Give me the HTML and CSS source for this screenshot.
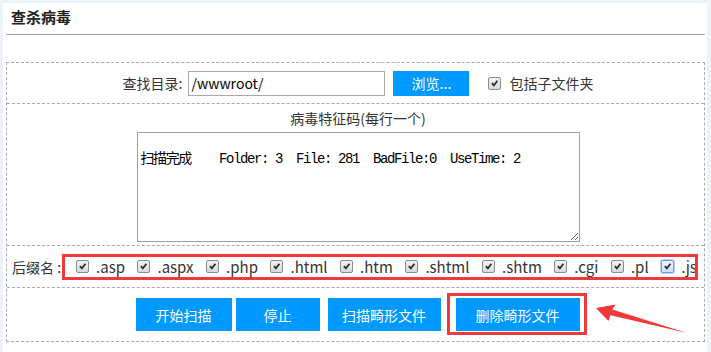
FILE: index.html
```html
<!DOCTYPE html>
<html lang="zh-CN">

<head>
    <meta charset="UTF-8">
    <title>查杀病毒</title>
    <link rel="stylesheet" href="styles.css">
</head>

<body>
    <svg class="defs" width="0" height="0">
        <symbol id="chk" viewBox="0 0 13 13">
            <path d="M2.6 6.8 L4.3 5.4 L5.7 7.2 L9.2 2.6 L10.8 3.8 L5.8 10.2 Z" fill="#2b2b2b" />
        </symbol>
    </svg>

    <div class="panel">
        <!-- Заголовок -->
        <h2 class="title">查杀病毒</h2>

        <div class="box">
            <!-- Каталог -->
            <div class="row row-path">
                <label class="lbl">查找目录:</label>
                <input class="path" type="text" value="/wwwroot/">
                <button class="btn btn-browse">浏览...</button>
                <label class="opt"><span class="ck"><svg><use href="#chk" /></svg></span>包括子文件夹</label>
            </div>

            <!-- Сигнатуры -->
            <div class="row row-sig">
                <div class="sig-title">病毒特征码(每行一个)</div>
                <textarea class="sig" spellcheck="false">

扫描完成    Folder: 3  File: 281  BadFile:0  UseTime: 2</textarea>
            </div>

            <!-- Расширения -->
            <div class="row row-ext">
                <span class="lbl">后缀名 :</span>
                <div class="ext-box">
                    <label class="ext"><span class="ck"><svg><use href="#chk" /></svg></span>.asp</label>
                    <label class="ext"><span class="ck"><svg><use href="#chk" /></svg></span>.aspx</label>
                    <label class="ext"><span class="ck"><svg><use href="#chk" /></svg></span>.php</label>
                    <label class="ext"><span class="ck"><svg><use href="#chk" /></svg></span>.html</label>
                    <label class="ext"><span class="ck"><svg><use href="#chk" /></svg></span>.htm</label>
                    <label class="ext"><span class="ck"><svg><use href="#chk" /></svg></span>.shtml</label>
                    <label class="ext"><span class="ck"><svg><use href="#chk" /></svg></span>.shtm</label>
                    <label class="ext"><span class="ck"><svg><use href="#chk" /></svg></span>.cgi</label>
                    <label class="ext"><span class="ck"><svg><use href="#chk" /></svg></span>.pl</label>
                    <label class="ext"><span class="ck focus"><svg><use href="#chk" /></svg></span>.js</label>
                </div>
            </div>

            <!-- Кнопки -->
            <div class="row row-btns">
                <button class="btn btn-start">开始扫描</button>
                <button class="btn btn-stop">停止</button>
                <button class="btn btn-scan">扫描畸形文件</button>
                <span class="mark"><button class="btn btn-del">删除畸形文件</button></span>
            </div>
        </div>

        <!-- Стрелка-пометка -->
        <svg class="arrow" width="100" height="40" viewBox="0 0 100 40">
            <polygon points="6,12 25.5,8.5 22.4,13.4 97,37 20.4,19.2 18.5,25" fill="#f03a3a" />
        </svg>
    </div>
</body>

</html>
```

FILE: styles.css
```css
/* Общие стили */
body {
    margin: 0;
    background-color: #edf2fa;
    font-family: 'Noto Sans CJK SC', 'Noto Sans', sans-serif;
    font-size: 14px;
    color: #333;
}

.defs {
    position: absolute;
}

.panel {
    position: relative;
    margin: 3px 4px 0 3px;
    min-height: 349px;
    background-color: #fff;
}

/* Заголовок */
.title {
    margin: 0 2px 0 3px;
    padding: 0 0 3px 5px;
    line-height: 28px;
    font-size: 15px;
    font-weight: bold;
    color: #222;
    border-bottom: 1px solid #a3a3a3;
}

/* Таблица с пунктиром */
.box {
    margin: 27px 2px 0 3px;
    border: 1px dashed #aaa;
}

.row {
    display: flex;
    align-items: center;
    justify-content: center;
}

.row + .row {
    border-top: 1px dashed #aaa;
}

.row-path {
    height: 40px;
    padding-left: 5px;
}

.row-path .lbl {
    margin-right: 6px;
}

.path {
    width: 197px;
    height: 25px;
    box-sizing: border-box;
    border: 1px solid #a9a9a9;
    padding: 0 2px;
    font-family: inherit;
    font-size: 14px;
    color: #000;
    outline: none;
}

.btn {
    border: none;
    background-color: #0099ff;
    color: #fff;
    font-family: inherit;
    font-size: 14px;
    padding: 0;
    cursor: pointer;
}

.btn-browse {
    width: 76px;
    height: 25px;
    margin-left: 8px;
}

.opt {
    display: flex;
    align-items: center;
    margin-left: 19px;
}

.opt .ck {
    margin-right: 8px;
}

/* Чекбокс */
.ck {
    display: inline-block;
    width: 13px;
    height: 13px;
    box-sizing: border-box;
    border: 1px solid #8c8c8c;
    border-radius: 2px;
    background: linear-gradient(#f3f3f3, #d9d9d9);
    flex: none;
}

.ck svg {
    display: block;
    width: 11px;
    height: 11px;
}

.ck.focus {
    border-color: #6e9de4;
    background: linear-gradient(#eef4fd, #cfdff6);
    box-shadow: 0 0 0 1px #b9d0f3;
}

/* Сигнатуры */
.row-sig {
    flex-direction: column;
    padding: 4px 0 3px 5px;
}

.sig-title {
    line-height: 20px;
}

.sig {
    width: 443px;
    height: 110px;
    box-sizing: border-box;
    margin-top: 4px;
    padding: 2px 3px;
    border: 1px solid #a0a0a0;
    font-family: 'Liberation Mono', 'Noto Sans CJK SC', monospace;
    font-size: 14px;
    letter-spacing: -1.4px;
    line-height: 16px;
    color: #000;
    outline: none;
}

/* Расширения */
.row-ext {
    height: 41px;
    justify-content: flex-start;
    padding-left: 5px;
}

.row-ext .lbl {
    margin-right: 1px;
}

.ext-box {
    display: flex;
    align-items: center;
    width: 636px;
    height: 26px;
    box-sizing: border-box;
    border: 3px solid #ee3a3a;
    padding-left: 11px;
    overflow: hidden;
    white-space: nowrap;
    font-size: 15px;
}

.ext {
    display: flex;
    align-items: center;
    margin-right: 12.5px;
}

.ext .ck {
    margin-right: 7px;
}

/* Кнопки */
.row-btns {
    height: 53px;
    padding-left: 4px;
}

.row-btns .btn {
    height: 33px;
}

.btn-start {
    width: 96px;
}

.btn-stop {
    width: 84px;
    margin-left: 4px;
}

.btn-scan {
    width: 113px;
    margin-left: 8px;
}

.mark {
    position: relative;
    margin-left: 15px;
    display: flex;
}

.btn-del {
    width: 124px;
}

.mark::after {
    content: '';
    position: absolute;
    left: -9px;
    right: -7px;
    top: -5px;
    bottom: -4px;
    border: 3px solid #ee3a3a;
}

.arrow {
    position: absolute;
    left: 587px;
    top: 293px;
}
```
